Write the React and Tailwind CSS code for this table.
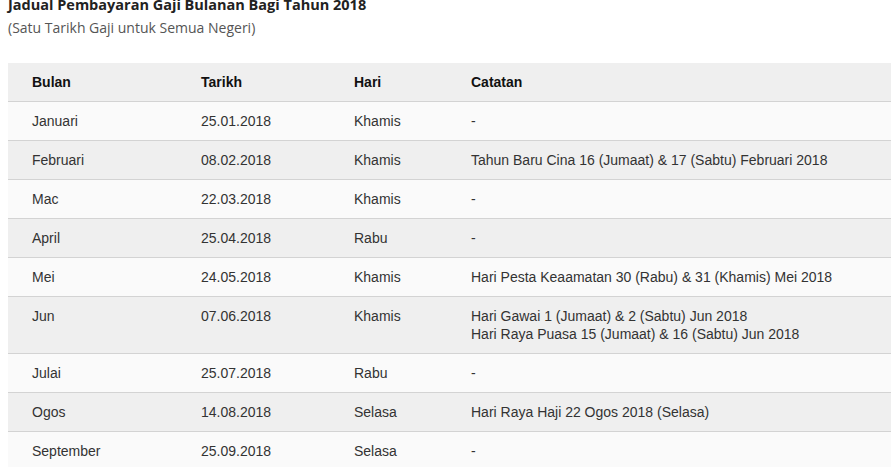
import React from "react";

const rows = [
  ["Januari", "25.01.2018", "Khamis", ["-"]],
  ["Februari", "08.02.2018", "Khamis", ["Tahun Baru Cina 16 (Jumaat) & 17 (Sabtu) Februari 2018"]],
  ["Mac", "22.03.2018", "Khamis", ["-"]],
  ["April", "25.04.2018", "Rabu", ["-"]],
  ["Mei", "24.05.2018", "Khamis", ["Hari Pesta Keaamatan 30 (Rabu) & 31 (Khamis) Mei 2018"]],
  ["Jun", "07.06.2018", "Khamis", ["Hari Gawai 1 (Jumaat) & 2 (Sabtu) Jun 2018", "Hari Raya Puasa 15 (Jumaat) & 16 (Sabtu) Jun 2018"]],
  ["Julai", "25.07.2018", "Rabu", ["-"]],
  ["Ogos", "14.08.2018", "Selasa", ["Hari Raya Haji 22 Ogos 2018 (Selasa)"]],
  ["September", "25.09.2018", "Selasa", ["-"]],
];

export default function App() {
  return (
    <div className="bg-white w-[891px] h-[467px] overflow-hidden">
      <div className="pl-2 -mt-[5px]">
        <div className="font-['Open_Sans',sans-serif] font-bold text-[14.5px] leading-[20px] text-[#222]">
          Jadual Pembayaran Gaji Bulanan Bagi Tahun 2018
        </div>
        <div className="font-['Open_Sans',sans-serif] text-[14px] leading-[20px] text-[#555] mt-[3px]">
          (Satu Tarikh Gaji untuk Semua Negeri)
        </div>
      </div>
      <div className="ml-2 mt-[25px] font-['Liberation_Sans',Arial,sans-serif] text-[14px] leading-[18px] text-[#333]">
        <div className="grid grid-cols-[169px_153px_117px_1fr] bg-[#efefef] border-b border-[#d3d3d3] font-bold text-[#111]">
          <div className="pl-6 py-[10px]">Bulan</div>
          <div className="pl-6 py-[10px]">Tarikh</div>
          <div className="pl-6 py-[10px]">Hari</div>
          <div className="pl-6 py-[10px]">Catatan</div>
        </div>
        {rows.map((r, i) => (
          <div
            key={r[0]}
            className={
              "grid grid-cols-[169px_153px_117px_1fr] border-b border-[#d3d3d3] " +
              (i % 2 === 0 ? "bg-[#fafafa]" : "bg-[#efefef]")
            }
          >
            <div className="pl-6 py-[10px]">{r[0]}</div>
            <div className="pl-6 py-[10px]">{r[1]}</div>
            <div className="pl-6 py-[10px]">{r[2]}</div>
            <div className="pl-6 py-[10px]">
              {r[3].map((t) => (
                <div key={t}>{t}</div>
              ))}
            </div>
          </div>
        ))}
      </div>
    </div>
  );
}
